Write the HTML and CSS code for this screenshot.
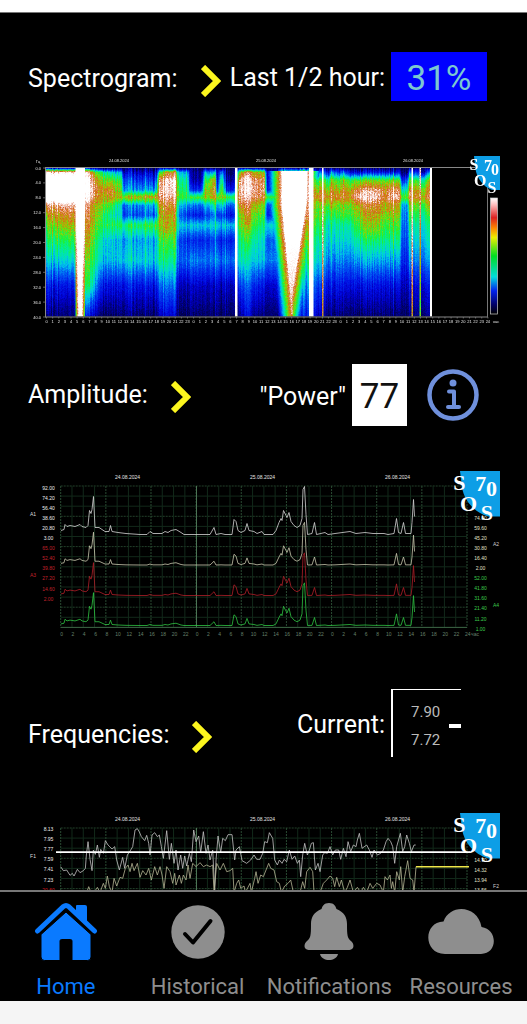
FILE: index.html
```html
<!DOCTYPE html>
<html lang="en">
<head>
    <meta charset="UTF-8">
    <meta name="viewport" content="width=device-width, initial-scale=1.0">
    <title>Home</title>
    <link rel="stylesheet" href="styles.css">
</head>
<body>
    <div class="status-strip"></div>

    <main class="content">
        <section>
            <header class="row row-spectrogram">
                <a class="title" href="#spectrogram">Spectrogram:
                    <svg class="chevron" viewBox="0 0 20 32"><path d="M2 2 L16 16 L2 30"/></svg>
                </a>
                <div class="reading">
                    <span class="caption">Last 1/2 hour:</span>
                    <span class="value percent">31%</span>
                </div>
            </header>
            <div class="chart" id="spectrogram">
                <canvas id="heat" width="1054" height="360"></canvas>
                <svg id="spectrogram-axes" viewBox="0 150 527 180"></svg>
            </div>
        </section>

        <section>
            <header class="row row-amplitude">
                <a class="title" href="#amplitude">Amplitude:
                    <svg class="chevron" viewBox="0 0 20 32"><path d="M2 2 L16 16 L2 30"/></svg>
                </a>
                <div class="reading">
                    <span class="caption">"Power"</span>
                    <span class="value power">77</span>
                    <button class="info" type="button" aria-label="Info">
                        <svg viewBox="0 0 52 52">
                            <circle cx="26" cy="26" r="23.5" stroke-width="4.5"/>
                            <circle class="dot" cx="26" cy="14" r="3.5"/>
                            <path d="M22 22.500 H27 V38 M21 38 H32" stroke-width="4"/>
                        </svg>
                    </button>
                </div>
            </header>
            <div class="chart">
                <svg id="amplitude" viewBox="0 465 527 180"></svg>
            </div>
        </section>

        <section>
            <header class="row row-frequencies">
                <a class="title" href="#frequencies">Frequencies:
                    <svg class="chevron" viewBox="0 0 20 32"><path d="M2 2 L16 16 L2 30"/></svg>
                </a>
                <div class="reading">
                    <span class="caption">Current:</span>
                    <div class="current">
                        <div class="current-values">
                            <span>7.90</span>
                            <span>7.72</span>
                        </div>
                        <div class="current-mark"></div>
                    </div>
                </div>
            </header>
            <div class="chart">
                <svg id="frequencies" viewBox="0 810 527 180"></svg>
            </div>
        </section>
    </main>

    <nav class="tabs">
        <a class="tab active" href="#home">
            <svg viewBox="0 0 66 60">
                <path d="M43 4 Q43 3 44 3 H52 Q54 3 54 5 V24 L43 14 Z"/>
                <path class="roof" d="M4.500 29 L30.500 4.500 Q33 2.500 35.500 4.500 L61.500 29"/>
                <path d="M33 10 L58 32.500 V55 Q58 58.500 54.500 58.500 H39 V39 Q39 37.500 37.500 37.500 H28.500 Q27 37.500 27 39 V58.500 H11.500 Q8 58.500 8 55 V32.500 Z"/>
            </svg>
            <span>Home</span>
        </a>
        <a class="tab" href="#historical">
            <svg viewBox="0 0 66 60">
                <circle cx="33" cy="30" r="26.700"/>
                <path class="check" d="M20 32 L28 40.500 L45.500 19"/>
            </svg>
            <span>Historical</span>
        </a>
        <a class="tab" href="#notifications">
            <svg viewBox="0 0 66 60">
                <path d="M33 1 C38 1 39.500 4 40.500 7 C48 10 51 15 51 22 C51 34 51.500 36 55 39 C58.500 42 58.500 47.500 53.500 48 H12.500 C7.500 47.500 7.500 42 11 39 C14.500 36 15 34 15 22 C15 15 18 10 25.500 7 C26.500 4 28 1 33 1 Z"/>
                <path d="M24 52 H42 C40 60 26 60 24 52 Z"/>
            </svg>
            <span>Notifications</span>
        </a>
        <a class="tab" href="#resources">
            <svg viewBox="0 0 66 60">
                <path d="M17 52 C-5 52 -5 20 15.500 19.500 C22 1 50 3 53.500 25 C70 27 70 52 53 52 Z"/>
            </svg>
            <span>Resources</span>
        </a>
    </nav>
    <div class="bottom-strip"></div>

    <script src="charts.js"></script>
</body>
</html>
```

FILE: styles.css
```css
* {
    box-sizing: border-box;
}

body {
    display: flex;
    flex-direction: column;
    height: 100vh;
    margin: 0;
    background: #000;
    color: #fff;
    font-family: Roboto, sans-serif;
    font-size: 25px;
    line-height: 30px;
}

a {
    color: inherit;
    text-decoration: none;
}

.status-strip {
    flex: none;
    height: 13px;
    background: #fff;
    border-bottom: 1px solid #777;
}

.bottom-strip {
    flex: none;
    height: 23px;
    background: #f5f5f5;
}

.content {
    flex: 1;
    min-height: 0;
    overflow: hidden;
}

.row {
    display: flex;
    justify-content: space-between;
    align-items: center;
    padding-left: 28px;
    white-space: nowrap;
}

.row-spectrogram {
    padding-top: 39px;
    padding-bottom: 49px;
    padding-right: 40px;
}

.row-spectrogram .title {
    padding-top: 4px;
}

.row-amplitude {
    padding-top: 34px;
    padding-bottom: 39px;
    padding-right: 48px;
}

.row-frequencies {
    padding-top: 44px;
    padding-bottom: 53px;
    padding-right: 66px;
}

.row-frequencies .title {
    padding-top: 24px;
}

.title {
    display: flex;
    align-items: center;
    gap: 23px;
}

.chevron {
    width: 20px;
    height: 32px;
    margin-top: 4px;
    fill: none;
    stroke: #fcf61e;
    stroke-width: 6;
}

.reading {
    display: flex;
    align-items: center;
    gap: 6px;
}

.caption {
    padding-top: 3px;
}

.value {
    font-size: 35px;
    text-align: center;
}

.percent {
    width: 96px;
    line-height: 49px;
    padding-top: 2px;
    height: 49px;
    background: #00f;
    color: #7cc8d0;
}

.power {
    width: 55px;
    height: 62px;
    padding-top: 2px;
    line-height: 62px;
    background: #fff;
    color: #111;
}

.info {
    width: 52px;
    height: 52px;
    margin-left: 14px;
    padding: 0;
    border: none;
    background: none;
}

.info svg {
    display: block;
    fill: none;
    stroke: #6f90dc;
    stroke-linecap: round;
    stroke-linejoin: round;
}

.info .dot {
    fill: #6f90dc;
    stroke: none;
}

.current {
    display: flex;
    align-items: center;
    justify-content: space-between;
    width: 70px;
    height: 68px;
    padding-top: 4px;
    padding-left: 18px;
    border-top: 1px solid #fff;
    border-left: 2px solid #fff;
}

.current-values {
    display: flex;
    flex-direction: column;
    color: #bbb;
    font-size: 15px;
    line-height: 28px;
}

.current-mark {
    width: 12px;
    height: 4px;
    background: #fff;
}

/* charts */
.chart {
    display: grid;
}

.chart > * {
    grid-area: 1 / 1;
    display: block;
    width: 100%;
    height: auto;
}

.chart text {
    font-family: "Liberation Sans", Arial, sans-serif;
    font-size: 5px;
    fill: #e4e4e4;
}

.chart .small {
    font-size: 4px;
}

.chart .logo-text {
    font-family: "Liberation Serif", "Times New Roman", serif;
    font-weight: bold;
    font-size: 22px;
    fill: #fff;
}

.chart .logo-small {
    font-size: 16px;
}

/* tab bar */
.tabs {
    flex: none;
    display: flex;
    border-top: 2px solid #777;
}

.tab {
    flex: 1 1 0;
    min-width: 0;
    display: flex;
    flex-direction: column;
    align-items: center;
    gap: 11px;
    padding-top: 10px;
    color: #8e8e8e;
    font-size: 22px;
    line-height: 28px;
}

.tab svg {
    width: 66px;
    height: 60px;
    fill: currentColor;
}

.tab .roof {
    fill: none;
    stroke: currentColor;
    stroke-width: 5;
    stroke-linecap: round;
}

.active .roof + path {
    stroke: #000;
    stroke-width: 1;
}

.tab .check {
    fill: none;
    stroke: #000;
    stroke-width: 4;
    stroke-linecap: round;
    stroke-linejoin: round;
}

.active {
    color: #0a7aff;
}
```

FILE: charts.js
```js
const NS = 'http://www.w3.org/2000/svg';

function add(svg, tag, attrs, text) {
    const el = document.createElementNS(NS, tag);
    for (const key in attrs) el.setAttribute(key, attrs[key]);
    if (text !== undefined) el.textContent = text;
    svg.appendChild(el);
    return el;
}

function label(svg, x, y, text, fill, anchor, cls) {
    const el = add(svg, 'text', { x: x, y: y, 'text-anchor': anchor || 'middle' }, text);
    if (fill) el.style.fill = fill;
    if (cls) el.setAttribute('class', cls);
}

function line(svg, x1, y1, x2, y2, stroke, width, dash) {
    const el = add(svg, 'line', { x1: x1, y1: y1, x2: x2, y2: y2, stroke: stroke, 'stroke-width': width || 1 });
    if (dash) el.setAttribute('stroke-dasharray', dash);
}

function logo(svg, x, y, w, h, cls) {
    const p = (a, b) => (x + a * w) + ' ' + (y + b * h);
    add(svg, 'path', {
        fill: '#0d9ee6',
        d: `M${p(0, 0)} L${p(1, 0)} L${p(1, 1)} L${p(0.7, 1)} C${p(0.35, 0.9)} ${p(0.1, 0.65)} ${p(0.05, 0.35)} Z`
    });
    const letters = [['S', -0.17, 0.42], ['O', 0, 0.88], ['7', 0.38, 0.45], ['0', 0.65, 0.56], ['S', 0.52, 1.08]];
    letters.forEach(([c, a, b]) => label(svg, x + a * w, y + b * h, c, null, 'start', 'logo-text ' + (cls || '')));
}

let seed = 7;
function rnd() {
    seed = (seed * 1103515245 + 12345) % 2147483648;
    return seed / 2147483648;
}

// ---- spectrogram ----
const ramp = [
    [0, 0, 0, 70], [0.15, 0, 0, 225], [0.3, 0, 90, 245], [0.4, 0, 200, 240],
    [0.5, 0, 240, 150], [0.6, 40, 240, 30], [0.7, 160, 220, 0], [0.8, 225, 120, 10],
    [0.88, 205, 80, 40], [0.95, 250, 205, 195], [1, 255, 255, 255]
];

function colour(v) {
    if (v <= 0) return [0, 0, 70];
    for (let i = 1; i < ramp.length; i++) {
        if (v <= ramp[i][0]) {
            const a = ramp[i - 1], b = ramp[i], t = (v - a[0]) / (b[0] - a[0]);
            return [1, 2, 3].map(k => a[k] + (b[k] - a[k]) * t);
        }
    }
    return [255, 255, 255];
}

const rows = [168, 172, 180, 190, 197, 205, 215, 225, 240, 260, 285, 316];
const cols = [
    [46, .1, 1, 1.3, 1.3, 1.25, .78, .64, .53, .46, .38, .17, .03],
    [50, .1, 1, 1.3, 1.3, 1.3, .9, .76, .64, .52, .4, .17, .03],
    [72, .1, 1, 1.3, 1.3, 1.3, .95, .82, .72, .56, .42, .17, .03],
    [85, .2, 1, 1.1, 1.1, 1.05, .92, .85, .8, .74, .62, .54, .2],
    [92, .1, .8, .95, 1.02, .95, .8, .77, .74, .66, .58, .48, .12],
    [95, .1, .6, .8, .85, .8, .7, .66, .62, .54, .5, .36, .08],
    [100, .05, .55, .68, .78, .78, .7, .62, .58, .48, .42, .22, .04],
    [110, .05, .45, .65, .85, .79, .62, .5, .57, .42, .4, .18, .03],
    [121, .05, .35, .55, .62, .72, .42, .42, .54, .38, .4, .17, .03],
    [124, .02, .1, .22, .32, .68, .28, .22, .5, .34, .4, .17, .03],
    [156, .02, .12, .24, .38, .78, .4, .3, .6, .38, .42, .18, .03],
    [159, .1, .5, .85, .9, .88, .76, .7, .68, .56, .5, .28, .1],
    [168, .1, .8, 1, 1, .95, .84, .76, .76, .6, .5, .32, .14],
    [175, .1, .8, .98, .98, .92, .8, .76, .68, .58, .48, .3, .12],
    [178, .05, .4, .52, .56, .62, .42, .34, .44, .28, .3, .12, .03],
    [188, .05, .4, .5, .55, .6, .38, .24, .42, .24, .32, .12, .03],
    [190, .02, .05, .08, .2, .56, .3, .18, .4, .2, .32, .12, .03],
    [201, .02, .05, .08, .22, .62, .3, .18, .4, .2, .32, .12, .03],
    [205, .05, .4, .56, .68, .7, .4, .26, .42, .22, .32, .12, .03],
    [212, .05, .3, .66, .7, .7, .4, .26, .42, .22, .32, .12, .03],
    [214, .05, .5, .9, .95, .85, .6, .4, .46, .3, .34, .12, .03],
    [217, .02, .02, .05, .15, .6, .3, .18, .4, .2, .32, .12, .03],
    [221, .05, .4, .6, .72, .74, .5, .3, .42, .22, .32, .12, .03],
    [226, .02, .05, .1, .2, .6, .3, .18, .4, .2, .32, .12, .03],
    [234, .02, .05, .1, .2, .6, .3, .18, .4, .2, .32, .12, .03],
    [239, .1, .6, .88, .92, .9, .78, .64, .6, .5, .44, .22, .05],
    [249, .1, .95, 1.06, 1.08, 1, .9, .84, .76, .6, .48, .32, .18],
    [254, .1, .7, .88, .9, .88, .7, .62, .55, .46, .4, .2, .05],
    [264, .1, .7, .88, .9, .84, .66, .58, .52, .44, .4, .18, .05],
    [267, .02, .1, .15, .2, .6, .26, .2, .42, .28, .32, .13, .03],
    [276, .02, .1, .2, .3, .6, .26, .22, .44, .3, .32, .13, .03],
    [280, .1, .55, .7, .75, .72, .6, .5, .5, .45, .42, .25, .1],
    [307, .1, .7, .9, .92, .92, .9, .86, .74, .64, .55, .36, .2],
    [316, .05, .2, .55, .7, .8, .64, .62, .57, .5, .44, .28, .14],
    [321, .05, .3, .6, .76, .84, .66, .62, .57, .5, .42, .24, .1],
    [328, .05, .15, .5, .66, .78, .6, .52, .44, .4, .32, .16, .03],
    [333, .05, .35, .68, .8, .84, .7, .58, .48, .42, .32, .16, .03],
    [338, .02, .15, .5, .64, .76, .58, .52, .44, .4, .32, .16, .03],
    [343, .05, .3, .68, .82, .84, .68, .6, .48, .42, .32, .16, .03],
    [349, .02, .15, .55, .72, .78, .64, .58, .48, .42, .32, .16, .03],
    [360, .02, .15, .62, .92, 1, .8, .7, .64, .52, .38, .17, .03],
    [376, .02, .15, .62, .9, .97, .82, .76, .68, .52, .36, .16, .03],
    [384, .02, .15, .6, .8, .82, .73, .66, .58, .5, .36, .16, .03],
    [394, .02, .15, .64, .92, .99, .8, .7, .6, .5, .36, .16, .03],
    [399, .02, .15, .6, .84, .88, .72, .66, .58, .5, .36, .16, .03],
    [402, .02, .05, .2, .45, .62, .38, .34, .32, .28, .22, .12, .03],
    [407, .02, .05, .3, .5, .66, .38, .34, .32, .28, .22, .12, .03],
    [410, .05, .3, .62, .82, .88, .68, .6, .5, .44, .34, .16, .05],
    [424, .05, .1, .5, .66, .76, .6, .5, .46, .4, .32, .16, .05],
    [430, .05, .4, .75, .88, .92, .76, .64, .54, .48, .38, .2, .08]
];

function power(x, y) {
    let i = 1, j = 1;
    while (i < cols.length - 1 && x > cols[i][0]) i++;
    while (j < rows.length - 1 && y > rows[j]) j++;
    const a = cols[i - 1], b = cols[i];
    const t = (x - a[0]) / (b[0] - a[0]);
    const u = Math.max(0, (y - rows[j - 1]) / (rows[j] - rows[j - 1]));
    const top = a[j] + (b[j] - a[j]) * t;
    const bottom = a[j + 1] + (b[j + 1] - a[j + 1]) * t;
    return top + (bottom - top) * u;
}

// [x, half width, strength, loss with depth, loss towards the edge with depth]
const spikes = [
    [80, 4.500, 1.35, 0, 0.8], [236, 1.200, 1.2, 0.05, 0.1], [311, 2.200, 1.3, 0, 0],
    [322.500, .5, 1.1, 0.3, 0], [412, .5, 1.1, 0.3, 0], [420, .5, 1, 0.4, 0], [431, 1.2, 1.2, 0, 0]
];

function drawHeat() {
    const ctx = document.getElementById('heat').getContext('2d');
    const stripes = [];
    for (let i = 0; i < 800; i += 2) {
        const s = (rnd() - 0.4) * (rnd() > 0.8 ? 0.28 : 0.12);
        stripes.push(s, s + (rnd() - 0.5) * 0.04);
    }

    for (let px = 92; px < 864; px++) {
        const x = px / 2;
        for (let py = 36; py < 333; py++) {
            const y = 150 + py / 2;
            const depth = (y - 168) / 148;
            let v = power(x, y);
            v += stripes[px - 92] * (1 - depth * 0.5);

            // the large evening burst narrows towards the bottom
            const centre = 294.500 - depth * 2.500;
            let half = depth < 0.25 ? 13 - depth * 2 : 12.500 - (depth - 0.25) * 17;
            if (x > centre && depth > 0.2) half -= (depth - 0.2) * 4;
            const d = Math.abs(x - centre);
            if (depth > 0.02) {
                const edge = d < half ? 1.3 - depth * 0.36 : 0.98 - depth * 0.06 - (d - half) * 0.06;
                v = Math.max(v, edge);
            }
            spikes.forEach(([sx, w, s, loss, side]) => {
                const sd = Math.abs(x - sx);
                if (sd <= w) v = Math.max(v, s - loss * depth - (sd / w) * depth * side);
            });

            v += (rnd() - 0.5) * (v > 0.6 ? 0.24 : 0.1);
            const c = colour(v);
            ctx.fillStyle = `rgb(${c[0] | 0},${c[1] | 0},${c[2] | 0})`;
            ctx.fillRect(px, py, 1, 1);
        }
    }

    // colour scale
    const g = ctx.createLinearGradient(0, 96, 0, 328);
    [[0, '#fff'], [.06, '#fbb'], [.17, '#d22'], [.26, '#f80'], [.34, '#ee0'], [.5, '#0d2'],
     [.68, '#0dd'], [.8, '#02e'], [.92, '#006'], [1, '#000']].forEach(s => g.addColorStop(s[0], s[1]));
    ctx.fillStyle = g;
    ctx.fillRect(981, 96, 14, 232);
}

function drawSpectrogramAxes() {
    const svg = document.getElementById('spectrogram-axes');
    line(svg, 46, 167.500, 488, 167.500, '#888');
    line(svg, 45.500, 167, 45.500, 317, '#888');
    line(svg, 45, 317, 488, 317, '#888');
    line(svg, 487.500, 167, 487.500, 317, '#777');
    add(svg, 'rect', { x: 490.500, y: 198, width: 7, height: 116, fill: 'none', stroke: '#ccc', 'stroke-width': .7 });

    ['24.08.2024', '25.08.2024', '26.08.2024'].forEach((d, i) => label(svg, 119 + i * 147, 162, d, null, null, 'small'));
    label(svg, 38, 163, 'Гц', null, null, 'small');
    for (let i = 0; i <= 10; i++) {
        const y = 168 + i * 14.900;
        label(svg, 41, y + 1.500, (i * 4).toFixed(1), null, 'end', 'small');
        line(svg, 43, y, 46, y, '#888', .7);
    }
    for (let h = 0; h <= 72; h++) {
        const x = 46.500 + h * 6.130;
        label(svg, x, 323, h === 72 ? 24 : h % 24, null, null, 'small');
        line(svg, x, 317, x, 318.500, '#888', .7);
    }
    label(svg, 496, 323, 'час', null, null, 'small');
    logo(svg, 474, 156, 26, 34, 'logo-small');
}

// ---- line charts ----
const LEFT = 60.700;
const RIGHT = 467;

function grid(svg, top, count) {
    const step = 10.100;
    const bottom = top + step * count;
    for (let i = 0; i <= count; i++) {
        line(svg, LEFT, top + i * step, RIGHT, top + i * step, i % 3 ? '#12291a' : '#23402b', 1, i % 3 ? '' : '2 1');
    }
    for (let i = 0; i <= 36; i++) {
        const x = LEFT + (RIGHT - LEFT) * i / 36;
        line(svg, x, top, x, bottom, i % 4 ? '#12291a' : '#294a32', 1, i % 4 ? '' : '2 1');
    }
    line(svg, 196.500, top, 196.500, bottom, '#4c7455', 1);
    ['24.08.2024', '25.08.2024', '26.08.2024'].forEach((d, i) => label(svg, 127.500 + i * 135, top - 7.500, d));
    return bottom;
}

function curve(svg, points, stroke) {
    add(svg, 'polyline', { points: points.join(' '), fill: 'none', stroke: stroke, 'stroke-width': .8 });
}

function drawAmplitude() {
    const svg = document.getElementById('amplitude');
    const bottom = grid(svg, 486, 14);
    line(svg, LEFT, bottom, RIGHT, bottom, '#3c6344');
    for (let h = 0; h <= 36; h++) {
        label(svg, LEFT + 1 + h * 11.280, 636, h === 36 ? 24 : (h * 2) % 24, '#66806b');
    }
    label(svg, 475, 636, 'час', '#66806b');

    const left = ['92.00', '74.20', '56.40', '38.60', '20.80', '3.00', '65.00', '52.40', '39.80', '27.20', '14.60', '2.00'];
    left.forEach((t, i) => label(svg, 48.500, 489.500 + i * 10.100, t, i < 6 ? '#eee' : '#c0222c'));
    const right = ['74.00', '59.60', '45.20', '30.80', '16.40', '2.00', '52.00', '41.80', '31.60', '21.40', '11.20', '1.00'];
    right.forEach((t, i) => label(svg, 480.500, 519.500 + i * 10.100, t, i < 6 ? '#e0e0c8' : '#3ccb4c'));
    label(svg, 33, 516, 'A1', '#ddd');
    label(svg, 33, 577, 'A3', '#c0222c');
    label(svg, 496, 546, 'A2', '#ccc');
    label(svg, 496, 607, 'A4', '#3ccb4c');

    const shape = [
        [61, 4], [64, 5], [65, 10], [67, 8], [70, 9], [75, 8], [80, 10], [82, 8], [86, 7], [88, 9], [89.500, 24], [91, 21],
        [92, 25], [93.500, 38], [95, 7], [99, 7], [105, 3], [109, 3], [110.500, 9], [112, 3], [118, 2], [126, 1], [140, 0],
        [147, 0], [150, 3], [153, 1], [162, 1], [165, 3], [168, 2], [171, 4], [176, 5], [181, 2], [184, 0], [210, 0],
        [214, 7], [216, 0], [221, 1], [225, 0], [232, 0], [234, 15], [236, 13], [238, 4], [241, 2], [245, 4], [247, 11],
        [249, 4], [254, 3], [257, 1], [262, 3], [264, 0], [273, 0], [276, 4], [279, 12], [281, 16], [282, 14], [283.500, 24],
        [286, 19], [287, 17], [289, 22], [291, 13], [294, 9], [297, 7], [300, 9], [302, 16], [303, 45], [304.500, 48],
        [306, 20], [307.500, 0], [312, 1], [314.500, 12], [316.500, 0], [325, 2], [328, 0], [335, 1], [350, 3], [356, 1],
        [365, 2], [373, 1], [384, 1], [388, 0], [394, 1], [396.500, 16], [398.500, 2], [401, 1], [403.500, 12],
        [405.500, 1], [411, 1], [412, 12], [413.500, 35], [414.500, 18]
    ];
    curve(svg, shape.map(([x, h]) => [x, 534.500 - h]), '#d6d6d6');
    [[565, '#c9c9ae'], [595.500, '#b01e28'], [625.500, '#2fc443']].forEach(([base, c]) => {
        curve(svg, shape.map(([x, h]) => [x, base - h * h / (h + 6)]), c);
    });
    logo(svg, 460, 471, 40, 45.500);
}

function drawFrequencies() {
    const svg = document.getElementById('frequencies');
    grid(svg, 828, 14);
    ['8.13', '7.95', '7.77', '7.59', '7.41', '7.23', '20.60'].forEach((t, i) => {
        label(svg, 48.500, 831 + i * 10.100, t, i < 6 ? '#eee' : '#d01822');
    });
    ['14.70', '14.32', '13.94', '13.56'].forEach((t, i) => label(svg, 480.500, 862 + i * 10.100, t, '#e0e0c8'));
    label(svg, 33, 858, 'F1', '#ddd');
    label(svg, 496, 888, 'F2', '#ccc');

    // samples are stored at three steps per unit
    const f1 = '0,200 8,212 18,210 28,226 35,220 40,228 50,208 58,218 68,212 74,205 77,165 82,125 88,178 94,212 98,150 104,163 110,135 116,172 120,148 128,160 134,122 142,135 154,147 162,140 168,180 176,210 186,172 192,205 200,165 210,150 216,140 223,90 230,86 236,96 242,110 252,122 258,106 264,130 268,165 274,105 282,98 290,110 296,105 302,140 308,175 318,92 326,178 332,130 340,190 346,150 352,210 360,165 366,205 372,168 378,198 386,160 392,185 399,90 406,125 414,108 420,158 428,95 436,160 442,135 448,180 456,150 462,272 466,180 472,108 480,158 486,115 494,122 502,104 514,104 522,180 526,150 536,140 544,182 558,190 570,180 580,165 588,178 598,178 606,160 612,125 620,128 626,98 630,105 636,115 642,180 650,195 656,180 664,190 670,178 678,185 686,150 694,178 702,168 710,190 716,180 720,230 726,165 732,130 740,165 746,150 752,130 758,128 764,210 772,190 778,215 786,165 792,158 800,160 808,140 816,165 824,150 834,150 840,178 848,145 856,170 862,125 870,155 878,135 886,140 890,120 896,100 904,145 918,135 926,150 934,172 940,150 950,165 960,160 968,150 976,125 982,115 990,125 996,140 1002,190 1008,140 1019,100 1026,155 1032,140 1038,105 1046,130 1052,155 1060,135 1065,135';
    const f2 = '78,277 84,260 90,275 100,277 110,262 118,277 128,250 134,265 140,228 146,260 154,277 160,235 168,258 178,232 186,235 194,205 202,195 208,215 214,190 220,212 230,190 238,232 246,212 256,225 264,205 272,240 282,200 290,225 298,200 304,225 310,265 318,200 328,215 336,250 342,220 346,255 356,225 362,250 368,225 376,240 382,195 388,235 396,190 406,200 418,188 428,200 438,195 448,200 456,195 460,277 468,190 478,210 488,190 498,215 508,212 516,205 520,277 528,250 534,240 540,265 550,258 554,277 568,250 572,277 582,235 586,215 592,250 600,225 608,230 616,210 624,190 630,205 640,210 648,245 656,250 662,277 672,258 682,250 690,240 698,277 718,277 726,245 732,265 738,215 748,202 756,215 760,277 778,277 788,250 798,240 808,228 816,235 822,260 828,232 836,260 842,240 852,277 860,262 868,240 878,277 890,262 900,277 908,262 918,277 928,250 936,265 948,250 958,255 968,277 973,230 980,240 988,225 992,265 996,245 1002,277 1008,215 1016,240 1020,200 1026,277 1032,230 1041,182 1048,235 1056,240 1060,277 1066,200';
    const scale = s => s.split(' ').map(p => p.split(',').map(Number)).map(([x, y]) => [LEFT + x / 3, 800 + y / 3]);
    curve(svg, scale(f1), '#c4c4c4');
    curve(svg, scale(f2), '#b5b594');

    line(svg, 56, 852.200, 470, 852.200, '#fff', 1.800);
    line(svg, 416, 866.800, 469, 866.800, '#eee84a', 1.500);
    logo(svg, 460, 813, 40, 45.500);
}

drawHeat();
drawSpectrogramAxes();
drawAmplitude();
drawFrequencies();
```
